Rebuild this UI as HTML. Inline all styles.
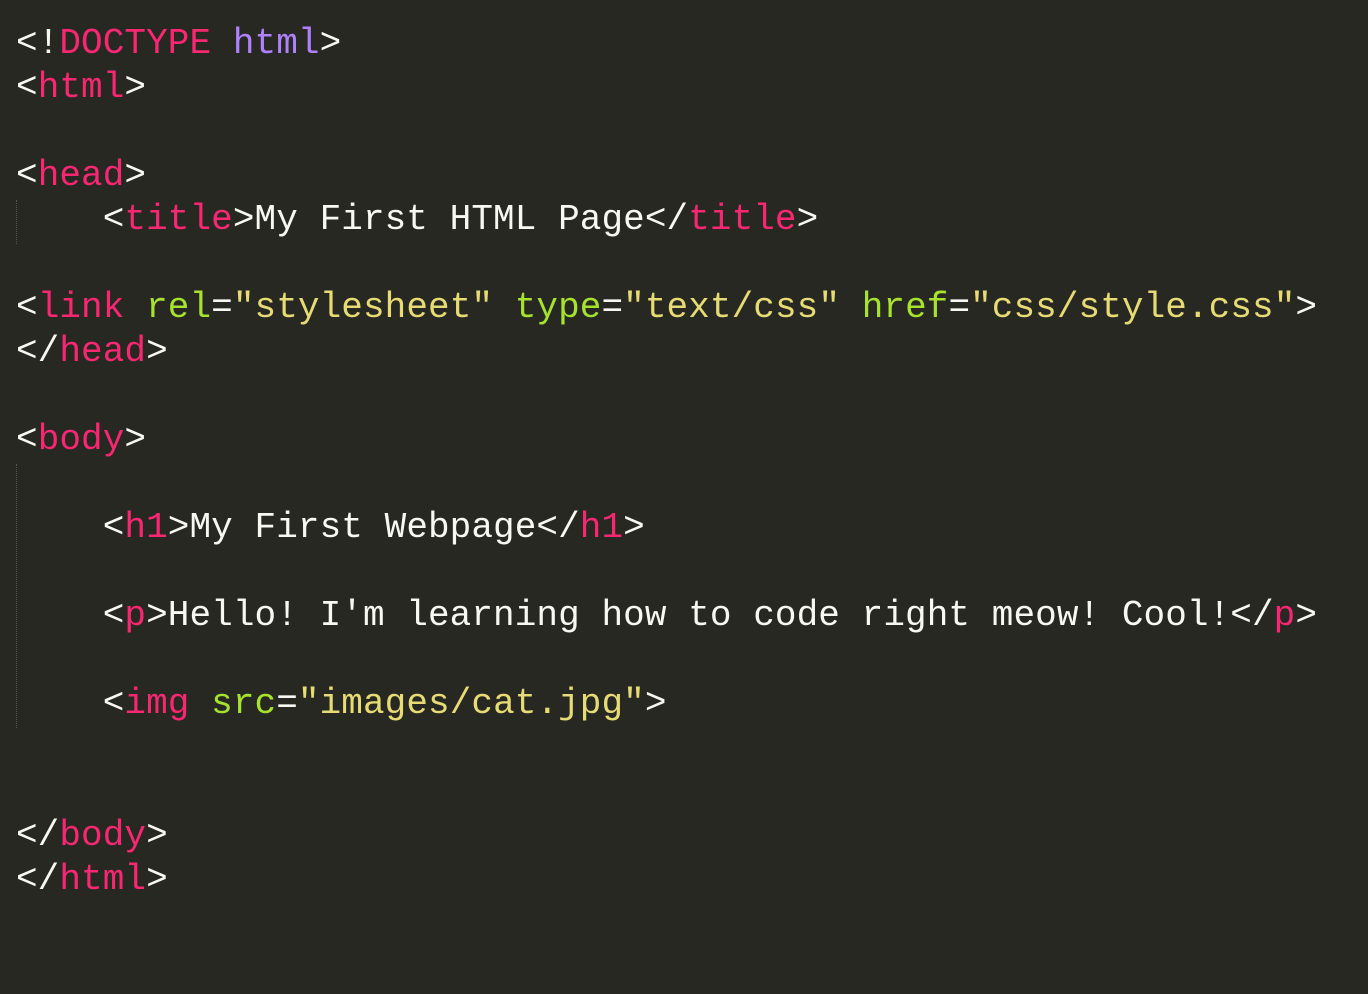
<!DOCTYPE html>
<html><head><style>
html,body{margin:0;padding:0;background:#272822;width:1368px;height:994px;overflow:hidden}
pre{margin:0;padding:22px 0 0 16px;font-family:"Liberation Mono","DejaVu Sans Mono",monospace;font-size:36px;line-height:44px;letter-spacing:0.08px;color:#f8f8f2;position:relative}
.t{color:#f92672}.a{color:#a6e22e}.s{color:#e6db74}.p{color:#ae81ff}
.g{position:absolute;left:16px;border-left:1px dotted #555}
</style></head><body>
<div class="g" style="top:200px;height:44px"></div>
<div class="g" style="top:464px;height:264px"></div>
<pre>&lt;!<span class="t">DOCTYPE</span> <span class="p">html</span>&gt;
&lt;<span class="t">html</span>&gt;

&lt;<span class="t">head</span>&gt;
    &lt;<span class="t">title</span>&gt;My First HTML Page&lt;/<span class="t">title</span>&gt;

&lt;<span class="t">link</span> <span class="a">rel</span>=<span class="s">"stylesheet"</span> <span class="a">type</span>=<span class="s">"text/css"</span> <span class="a">href</span>=<span class="s">"css/style.css"</span>&gt;
&lt;/<span class="t">head</span>&gt;

&lt;<span class="t">body</span>&gt;

    &lt;<span class="t">h1</span>&gt;My First Webpage&lt;/<span class="t">h1</span>&gt;

    &lt;<span class="t">p</span>&gt;Hello! I'm learning how to code right meow! Cool!&lt;/<span class="t">p</span>&gt;

    &lt;<span class="t">img</span> <span class="a">src</span>=<span class="s">"images/cat.jpg"</span>&gt;


&lt;/<span class="t">body</span>&gt;
&lt;/<span class="t">html</span>&gt;
</pre>
</body></html>
